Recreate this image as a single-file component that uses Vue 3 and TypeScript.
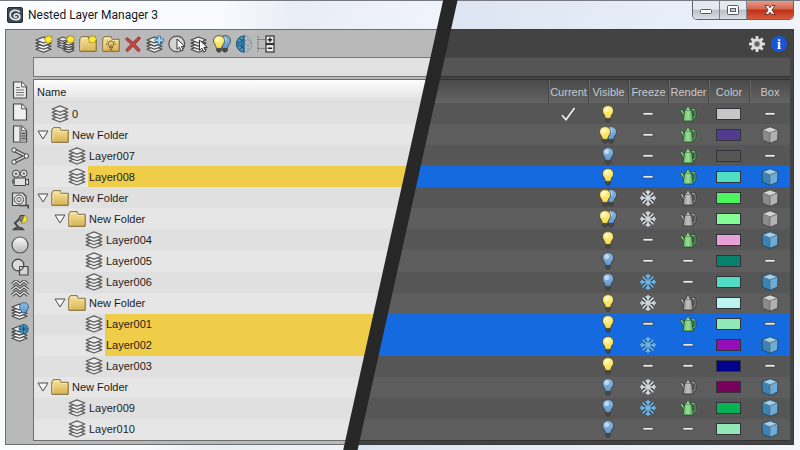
<script setup lang="ts">
import { ref } from 'vue'

type Kind = 'layer' | 'folder'

interface Row {
  name: string
  kind: Kind
  depth: number
  selected?: boolean
  current?: boolean
  visible: 'bulbOn' | 'bulbOff' | 'bulbBoth'
  freeze: 'dash' | 'flakeGrey' | 'flakeBlue'
  render: 'dash' | 'potGreen' | 'potGrey'
  color: string
  box: 'dash' | 'cubeGrey' | 'cubeBlue'
}

const rows: Row[] = [
  { name: '0', kind: 'layer', depth: 0, current: true, visible: 'bulbOn', freeze: 'dash', render: 'potGreen', color: '#c6c6c6', box: 'dash' },
  { name: 'New Folder', kind: 'folder', depth: 0, visible: 'bulbBoth', freeze: 'dash', render: 'potGreen', color: '#533b90', box: 'cubeGrey' },
  { name: 'Layer007', kind: 'layer', depth: 1, visible: 'bulbOff', freeze: 'dash', render: 'potGreen', color: '#565656', box: 'dash' },
  { name: 'Layer008', kind: 'layer', depth: 1, selected: true, visible: 'bulbOn', freeze: 'dash', render: 'potGreen', color: '#4fe0c4', box: 'cubeBlue' },
  { name: 'New Folder', kind: 'folder', depth: 0, visible: 'bulbBoth', freeze: 'flakeGrey', render: 'potGrey', color: '#4ef45f', box: 'cubeGrey' },
  { name: 'New Folder', kind: 'folder', depth: 1, visible: 'bulbBoth', freeze: 'flakeGrey', render: 'potGrey', color: '#84fd92', box: 'cubeGrey' },
  { name: 'Layer004', kind: 'layer', depth: 2, visible: 'bulbOn', freeze: 'dash', render: 'potGreen', color: '#e8a0d8', box: 'cubeBlue' },
  { name: 'Layer005', kind: 'layer', depth: 2, visible: 'bulbOff', freeze: 'dash', render: 'dash', color: '#08806c', box: 'dash' },
  { name: 'Layer006', kind: 'layer', depth: 2, visible: 'bulbOff', freeze: 'flakeBlue', render: 'dash', color: '#50dcc2', box: 'cubeBlue' },
  { name: 'New Folder', kind: 'folder', depth: 1, visible: 'bulbOn', freeze: 'flakeGrey', render: 'potGrey', color: '#bdf3ee', box: 'cubeGrey' },
  { name: 'Layer001', kind: 'layer', depth: 2, selected: true, visible: 'bulbOn', freeze: 'dash', render: 'potGreen', color: '#92e7b6', box: 'dash' },
  { name: 'Layer002', kind: 'layer', depth: 2, selected: true, visible: 'bulbOn', freeze: 'flakeBlue', render: 'dash', color: '#9410b6', box: 'cubeBlue' },
  { name: 'Layer003', kind: 'layer', depth: 2, visible: 'bulbOn', freeze: 'dash', render: 'dash', color: '#02028c', box: 'dash' },
  { name: 'New Folder', kind: 'folder', depth: 0, visible: 'bulbOff', freeze: 'flakeGrey', render: 'potGrey', color: '#78025a', box: 'cubeBlue' },
  { name: 'Layer009', kind: 'layer', depth: 1, visible: 'bulbOff', freeze: 'flakeBlue', render: 'potGreen', color: '#08b254', box: 'cubeBlue' },
  { name: 'Layer010', kind: 'layer', depth: 1, visible: 'bulbOff', freeze: 'dash', render: 'dash', color: '#92e7b6', box: 'cubeBlue' },
]

const columns = ['Current', 'Visible', 'Freeze', 'Render', 'Color', 'Box']

/* Four stacked sheets, painted bottom first. */
function stack(x: number, y: number, w: number, step: number, fill: string, stroke: string): string {
  const h = w * 0.2
  let out = ''
  for (let i = 3; i >= 0; i--) {
    const t = y + i * step
    out += `<path d="M${x + w / 2} ${t}L${x + w} ${t + h}L${x + w / 2} ${t + 2 * h}L${x} ${t + h}Z" fill="${fill}" stroke="${stroke}" stroke-width="1.2" stroke-linejoin="round"/>`
  }
  return out
}

function bulb(cx: number, fill: string): string {
  return `<g transform="translate(${cx} 0)"><path d="M-2.400 13h4.800v2.600l-1.200 1.500h-2.400l-1.200-1.500z" fill="#4a4a4a" stroke="#2e2e2e" stroke-width=".6"/>
  <path d="M0 .6c-3.400 0-5.500 2.300-5.500 5.200 0 2.700 1.800 3.700 2.500 5.700.3 1 .2 1.700.8 1.900h4.400c.6-.2.500-.9.800-1.900.7-2 2.500-3 2.500-5.700 0-2.900-2.100-5.200-5.500-5.200z" fill="url(#${fill})" stroke="#3c3c34" stroke-width=".8"/>
  <ellipse cx="-1.200" cy="4.800" rx="2.300" ry="2.500" fill="#fff" opacity=".55"/></g>`
}

function flake(color: string): string {
  let arms = ''
  for (let a = 0; a < 360; a += 45) {
    arms += a % 90 === 0
      ? `<path d="M9 9V1M6.700 2.300 9 4.600l2.300-2.300" transform="rotate(${a} 9 9)"/>`
      : `<path d="M9 9V1.400" transform="rotate(${a} 9 9)"/>`
  }
  const g = (c: string, w: number, o: number) => `<g fill="none" stroke="${c}" stroke-width="${w}" stroke-opacity="${o}">${arms}</g>`
  return g('#26303a', 2.8, 0.5) + g(color, 1.5, 1)
}

function pot(fill: string, stroke: string): string {
  return `<path d="M5.400 13.800 3.400 8.600 1 5.400l1.800-1.200 2.200 3.200 1.200 1.600z" fill="url(#${fill})" stroke="${stroke}" stroke-width=".8"/>
  <path d="M12.200 6.200c1-2.200 4-2.200 4 .6v3.600c0 1.400-1 2.400-2.800 2.800" fill="none" stroke="${stroke}" stroke-width="2.400"/>
  <path d="M12.200 6.200c1-2.200 4-2.200 4 .6v3.600c0 1.400-1 2.400-2.800 2.800" fill="none" stroke="url(#${fill})" stroke-width="1.100"/>
  <path d="M7.800 3.600c-.4-2.800 2.800-2.800 2.400 0l2.300 1.200 1.900 11.200H4l1.700-11.200z" fill="url(#${fill})" stroke="${stroke}" stroke-width=".8" stroke-linejoin="round"/>
  <path d="M6 5.600h6.200" stroke="${stroke}" stroke-width=".7" opacity=".7"/>`
}

function cube(top: string, left: string, right: string, edge: string): string {
  return `<g stroke="${edge}" stroke-width=".9" stroke-linejoin="round"><path d="M9 .8 17 3.800 9 7 1 3.800z" fill="${top}"/><path d="M1 3.800 9 7v10.400l-7.600-3.400z" fill="${left}"/><path d="M17 3.800 9 7v10.400l7.600-3.400z" fill="${right}"/></g><path d="M9 7.400v8.800M2 4.200 9 7l7-2.800" stroke="#fff" stroke-opacity=".45" stroke-width=".8" fill="none"/>`
}

const folderShape = (x: number) =>
  `<path d="M${x} 4.200V16.600h16.400V4.600h-7.600L9.200 2H2.400z" transform="translate(0 -.3)" fill="url(#gold)" stroke="#776636" stroke-width="1" stroke-linejoin="round"/><path d="M1.900 6.200V15.400M2 4.500 3 2.900h5.600l1.600 2.500h6" stroke="#fff6c8" stroke-width=".8" fill="none" opacity=".8"/>`

const spark = `<path d="M13.500 0l1.200 1.700 2-.6-.2 2.100 1.500 1.300-1.700 1.200.2 2.100-1.900-.5-1.300 1.600-1.200-1.700-2 .4.300-2-1.600-1.400 1.800-1.100-.1-2.100 1.900.7z" fill="#ffe92e" stroke="#948424" stroke-width=".7"/>`
const pointer = (x: number, y: number) =>
  `<path transform="translate(${x} ${y})" d="M0 0v10.400l2.400-2.200 1.800 3.900 2-1-1.800-3.600h3.400z" fill="#fff" stroke="#222" stroke-width=".9" stroke-linejoin="round"/>`
const sheet = (fill: string) =>
  `<path d="M2.500 1h8.300L15.500 5.800V17h-13z" fill="${fill}" stroke="#4a4a4a" stroke-width="1.200"/><path d="M10.700 1.200v4.700h4.700" fill="#fff" stroke="#4a4a4a"/>`
const smallGlobe = (x: number, y: number, r: number) =>
  `<circle cx="${x}" cy="${y}" r="${r}" fill="#4f9fd2" stroke="#23506e" stroke-width=".8"/><path d="M${x - r} ${y}h${2 * r}M${x} ${y - r}v${2 * r}M${x - r * 0.7} ${y - r * 0.7}l${r * 1.4} ${r * 1.4}M${x + r * 0.7} ${y - r * 0.7}l${-r * 1.4} ${r * 1.4}" stroke="#1d4664" stroke-width=".8"/>`

const tool = (x = 1, w = 15) => stack(x, 2, w, 3.1, '#f2f2f2', '#444')

const icons: Record<string, string> = {
  layer: stack(1.2, 0.9, 15.6, 3.3, '#ededed', '#606060'),
  folder: folderShape(0.8),
  check: '<path d="M3 10.200 7 14.800 15.500 3" fill="none" stroke="#f2f2f2" stroke-width="1.600"/>',
  dash: '<rect x="4" y="7.600" width="10" height="2.400" fill="#ececec" stroke="#3e3e3e" stroke-width=".6"/>',
  bulbOn: bulb(9, 'sun'),
  bulbOff: bulb(9, 'sky'),
  bulbBoth: bulb(12, 'sky') + bulb(6, 'sun'),
  flakeGrey: flake('#d9dee2'),
  flakeBlue: flake('#6dbcf0'),
  potGreen: pot('leaf', '#244d28'),
  potGrey: pot('steel', '#343434'),
  cubeGrey: cube('#d4d4d4', '#8b8b8b', '#b2b2b2', '#454545'),
  cubeBlue: cube('#a2d0ec', '#3b83b4', '#6cacd6', '#234860'),
  newLayer: tool() + spark,
  newStack: stack(0.5, 2, 11, 2.4, '#e2e2e2', '#555') + stack(6.500, 6, 10.500, 2.4, '#f2f2f2', '#444') + spark,
  newFolder: folderShape(0.8) + spark,
  bulbFolder: folderShape(0.8) + '<path d="M7.600 14.600h2.800M9 5.900a3 3 0 0 0-1.700 5.300l.4 1.800h2.600l.4-1.800A3 3 0 0 0 9 5.900zM9 9.500V13M4 9h1.200M12.800 9H14M5 5.900l.9.900M13 5.900l-.9.900" fill="none" stroke="#6f6232" stroke-width="1"/>',
  remove: '<path d="M3.200 2.500 9 7.300l5.600-5.600 2 1.700L11 9.200l5.400 5.900-2.200 1.700L9 11.200l-5.400 5.500-2-1.600L7 9.300 1.500 4.200z" fill="#c94444" stroke="#7a2727" stroke-width=".8"/>',
  addLayer: tool() + '<path d="M11.900 1h2.600v2.900h3v2.600h-3v2.900h-2.600V6.500h-3V3.900h3z" fill="#a6daf8" stroke="#2a6f9e" stroke-width=".8"/>',
  pick: '<circle cx="8.800" cy="9" r="7.900" fill="#d4d4d4" stroke="#555" stroke-width="1.200"/>' + pointer(9, 4),
  pickLayer: tool() + pointer(9.500, 5),
  bulbs: bulb(12, 'sky') + bulb(6, 'sun'),
  globe: '<path d="M9 1v16C-1 17-1 1 9 1z" fill="#4292c4" stroke="#1f4c69"/><path d="M4.200 3.500 7 5.500 4.500 8 2 7M1.800 11 4.600 9.700 7 12l-2.500 2.700M7 5.500V12M9 4 7 5.500M9 14l-2-2" stroke="#1f4c69" fill="none"/><path d="M10 1c9 1 9 15 0 16M10 6l3-1.500M13 4.500l3 3.500-3 2.500-3-2M13 10.500v4.500" fill="none" stroke="#71899a" stroke-dasharray="1.500 1"/><path d="M9.200 0v18" stroke="#3375a0"/>',
  expand: '<path d="M1 1v16M1 4.500h8M1 13.500h8" fill="none" stroke="#666" stroke-dasharray="1.500 1"/><g fill="#eee" stroke="#333" stroke-width="1.200"><rect x="9" y="1" width="8" height="7.500"/><rect x="9" y="9.500" width="8" height="7.500"/></g><path d="M10.800 4.800h4.400M13 2.600V7M10.800 13.200h4.400" stroke="#222" stroke-width="1.400"/>',
  page: sheet('#ececec') + '<path d="M5 6.500h4M5 9h8M5 11.500h8M5 14h8" stroke="#777"/>',
  pageBlank: sheet('#f0f0f0'),
  pageSplit: sheet('#ececec') + '<path d="M9 6.500h6V16.500H9z" fill="#a8a8a8"/><path d="M9 2v14.500M10.500 8.500h4M10.500 11h4M10.500 13.500h4" stroke="#555"/>',
  spline: '<path d="M3 3 15 9 3 15" fill="none" stroke="#444" stroke-width="3.800"/><path d="M3 3 15 9 3 15" fill="none" stroke="#d4d4d4" stroke-width="1.600"/><g fill="#eee" stroke="#444"><circle cx="3" cy="3" r="2.200"/><circle cx="15.300" cy="9" r="2.200"/><circle cx="3" cy="15" r="2.200"/></g>',
  camera: '<g fill="#e0e0e0" stroke="#444"><circle cx="5" cy="4.700" r="3.600"/><circle cx="12.800" cy="4.400" r="3.400"/><path d="M3 9h11.500v7.500H3zM14.500 11.500 17.500 10v6l-3-1.500z"/></g><g fill="#666"><circle cx="5" cy="4.700" r="1.300"/><circle cx="12.800" cy="4.400" r="1.200"/></g><path d="M1 10.500h3v4H1z" fill="#666"/>',
  tape: '<path d="M1.500 2h10.500l3 3.500v9h-13.500z" fill="#ddd" stroke="#444" stroke-width="1.200"/><circle cx="8" cy="8.500" r="4.500" fill="#f4f4f4" stroke="#444"/><circle cx="8" cy="8.500" r="2.200" fill="#d0d0d0" stroke="#666"/><path d="M8 14.500h9.200v3" fill="none" stroke="#444" stroke-width="1.600"/>',
  lamp: '<path d="M10.500 3 4 9l4 5" fill="none" stroke="#444" stroke-width="2"/><path d="M2.500 15.500c2-2.600 8-2.600 10 0z" fill="#aaa" stroke="#444" stroke-width="1.400"/><path d="M9 1.500h5l1.500 5-4.500 2.200-3-4z" fill="#777" stroke="#444"/><path d="M13.500 1.500c3.500.5 3.500 5 .5 7l-3.600.8z" fill="#f4e43c" stroke="#8c8428" stroke-width=".7"/>',
  sphere: '<circle cx="9" cy="9" r="8" fill="url(#ball)" stroke="#555" stroke-width="1.200"/>',
  shapes: '<path d="M8.500 8.500h8.500V17H8.500z" fill="#d4d4d4" stroke="#444" stroke-width="1.200"/><circle cx="7" cy="7" r="5.800" fill="#e2e2e2" fill-opacity=".85" stroke="#444" stroke-width="1.200"/><path d="M12.500 8.500h-4v4" fill="none" stroke="#444"/>',
  waves: [2.500, 8, 13.500].map((y) => `<path d="M1 ${y + 2} 5 ${y - 1.500}l4 3.500 4-3.500 4 3.500" fill="none" stroke="#444" stroke-width="3.200" stroke-linejoin="round"/><path d="M1 ${y + 2} 5 ${y - 1.500}l4 3.500 4-3.500 4 3.500" fill="none" stroke="#e6e6e6" stroke-width="1.300"/>`).join(''),
  layerBulb: tool() + '<path d="M13 .6c-2.700 0-4.500 1.900-4.500 4.200 0 2.200 1.900 2.900 2.400 6h4.200c.5-3.100 2.400-3.800 2.400-6 0-2.300-1.800-4.200-4.500-4.200z" fill="url(#sky)" stroke="#2c5878" stroke-width=".8"/>',
  layerGlobe: tool() + smallGlobe(12.600, 5, 4.600),
  gear:
    '<g fill="#dcdcdc">' +
    [0, 45, 90, 135].map((a) => `<path d="M7.700 1h2.600l.8 8-.8 8H7.700l-.8-8z" transform="rotate(${a} 9 9)"/>`).join('') +
    '<circle cx="9" cy="9" r="5.600"/></g><circle cx="9" cy="9" r="2.500" fill="#55585c" stroke="#96969a" stroke-width="1.200"/>',
}

const toolbar: [string, string][] = [
  ['newLayer', 'New layer'],
  ['newStack', 'New layer from selection'],
  ['newFolder', 'New folder'],
  ['bulbFolder', 'Isolate folder'],
  ['remove', 'Delete'],
  ['addLayer', 'Add selection to layer'],
  ['pick', 'Select objects'],
  ['pickLayer', 'Select layers'],
  ['bulbs', 'Toggle visibility'],
  ['globe', 'Toggle freeze'],
  ['expand', 'Expand or collapse all'],
]

const sidebar: [string, string][] = [
  ['page', 'All'],
  ['pageBlank', 'None'],
  ['pageSplit', 'Invert'],
  ['spline', 'Shapes'],
  ['camera', 'Cameras'],
  ['tape', 'Helpers'],
  ['lamp', 'Lights'],
  ['sphere', 'Geometry'],
  ['shapes', 'Groups'],
  ['waves', 'Space warps'],
  ['layerBulb', 'Hidden layers'],
  ['layerGlobe', 'Frozen layers'],
]

const query = ref('')
</script>

<template>
  <main class="stage">
    <svg class="defs" aria-hidden="true">
      <defs>
        <linearGradient id="gold" x1="0" y1="0" x2="0" y2="1"><stop offset="0" stop-color="#f7e5a0" /><stop offset="1" stop-color="#d9b350" /></linearGradient>
        <linearGradient id="sun" x1="0" y1="0" x2="0" y2="1"><stop offset="0" stop-color="#fff48c" /><stop offset="1" stop-color="#f8dc50" /></linearGradient>
        <linearGradient id="sky" x1="0" y1="0" x2="0" y2="1"><stop offset="0" stop-color="#8dbbe8" /><stop offset="1" stop-color="#6099d4" /></linearGradient>
        <linearGradient id="leaf"><stop offset="0" stop-color="#66b46c" /><stop offset=".5" stop-color="#9be094" /><stop offset="1" stop-color="#4f9c58" /></linearGradient>
        <linearGradient id="steel"><stop offset="0" stop-color="#8e8e8e" /><stop offset=".5" stop-color="#c4c4c4" /><stop offset="1" stop-color="#858585" /></linearGradient>
        <linearGradient id="ball" x1="0" y1="0" x2="0" y2="1"><stop offset="0" stop-color="#fafafa" /><stop offset="1" stop-color="#b8b8b8" /></linearGradient>
      </defs>
    </svg>

    <section class="window light">
      <header class="titlebar">
        <svg class="logo" viewBox="0 0 16 16" aria-hidden="true">
          <rect x=".5" y=".5" width="15" height="15" rx="1.500" fill="#3d4752" stroke="#252c34" />
          <path d="M12.800 5.200C10.500 2.300 3.200 2.300 3.200 8c0 5.600 9 6 9.600 2 .4-3.600-5.600-4-5.700-1.200 0 1.600 2.200 1.900 3 .7" fill="none" stroke="#e4e9ee" stroke-width="1.700" />
        </svg>
        <h1>Nested Layer Manager 3</h1>
      </header>
      <div class="body">
        <nav class="sidebar">
          <button v-for="[icon, label] in sidebar" :key="icon" type="button" :aria-label="label">
            <svg class="icon" viewBox="0 0 18 18" v-html="icons[icon]"></svg>
          </button>
        </nav>
        <div class="content">
          <div class="toolbar">
            <button v-for="[icon, label] in toolbar" :key="icon" type="button" :aria-label="label">
              <svg class="icon" viewBox="0 0 18 18" v-html="icons[icon]"></svg>
            </button>
          </div>
          <input v-model="query" class="search" type="text" aria-label="Filter layers" />
          <table class="grid">
            <thead>
              <tr><th scope="col">Name</th></tr>
            </thead>
            <tbody>
              <tr v-for="(row, i) in rows" :key="i" :class="{ selected: row.selected }">
                <td :class="['name', 'depth-' + row.depth]">
                  <button v-if="row.kind === 'folder'" class="twisty" type="button" aria-label="Collapse folder">
                    <svg viewBox="0 0 12 12"><path d="M1 2h10L6 10z" fill="#f6f6f6" stroke="#4c4c4c" /></svg>
                  </button>
                  <span v-else class="twisty"></span>
                  <svg class="icon" viewBox="0 0 18 18" v-html="icons[row.kind]"></svg>
                  <span class="label">{{ row.name }}</span>
                </td>
              </tr>
            </tbody>
          </table>
        </div>
      </div>
    </section>

    <section class="window dark">
      <header class="titlebar">
        <div class="controls">
          <button type="button" aria-label="Minimize">
            <svg viewBox="0 0 14 14"><rect x="1.500" y="6.500" width="11" height="4" rx="1" fill="#fff" stroke="#555c68" /></svg>
          </button>
          <button type="button" aria-label="Maximize">
            <svg viewBox="0 0 14 14"><rect x="1.500" y="2.500" width="11" height="9" rx="1" fill="#fff" stroke="#555c68" /><rect x="4.500" y="5.500" width="5" height="3" fill="#c6ccd6" stroke="#555c68" /></svg>
          </button>
          <button class="close" type="button" aria-label="Close">
            <svg viewBox="0 0 14 14"><path d="M2 2.500h3.200L7 4.800l1.800-2.300H12L8.900 7l3.100 4.500H8.800L7 9.200l-1.800 2.300H2L5.100 7z" fill="#fff" stroke="#5c3230" stroke-width=".9" /></svg>
          </button>
        </div>
      </header>
      <div class="body">
        <div class="content">
          <div class="toolbar">
            <button type="button" aria-label="Settings">
              <svg class="icon" viewBox="0 0 18 18" v-html="icons.gear"></svg>
            </button>
            <button type="button" aria-label="Information">
              <svg class="icon" viewBox="0 0 18 18">
                <circle cx="9" cy="9" r="8" fill="#1557d8" />
                <text class="info" x="9" y="14" text-anchor="middle">i</text>
              </svg>
            </button>
          </div>
          <div class="search"></div>
          <table class="grid">
            <thead>
              <tr>
                <td></td>
                <th v-for="column in columns" :key="column" scope="col">{{ column }}</th>
              </tr>
            </thead>
            <tbody>
              <tr v-for="(row, i) in rows" :key="i" :class="{ selected: row.selected }">
                <td></td>
                <td><svg v-if="row.current" class="icon" viewBox="0 0 18 18" v-html="icons.check"></svg></td>
                <td><svg class="icon" viewBox="0 0 18 18" v-html="icons[row.visible]"></svg></td>
                <td><svg class="icon" viewBox="0 0 18 18" v-html="icons[row.freeze]"></svg></td>
                <td><svg class="icon" viewBox="0 0 18 18" v-html="icons[row.render]"></svg></td>
                <td><button class="swatch" type="button" aria-label="Layer color" :style="{ backgroundColor: row.color }"></button></td>
                <td><svg class="icon" viewBox="0 0 18 18" v-html="icons[row.box]"></svg></td>
              </tr>
            </tbody>
          </table>
        </div>
      </div>
    </section>

    <div class="divider" aria-hidden="true"></div>
  </main>
</template>

<style>
body {
  margin: 0;
}
</style>

<style scoped>
.stage {
  display: grid;
  min-height: 100vh;
  font-family: 'Liberation Sans', Arial, sans-serif;
  font-size: 11px;
  overflow: hidden;
}

.defs {
  position: absolute;
  width: 0;
  height: 0;
}

/* Both windows and the divider share one cell; clip paths split them along a slanted line. */
.window,
.divider {
  grid-area: 1 / 1;
}

.window {
  box-sizing: border-box;
  display: flex;
  flex-direction: column;
  padding: 0 5px 5px;
  border-top: 1px solid #777982;
}

.light {
  background: linear-gradient(100deg, #fbfdff 0, #f8fbff 25%, #e9edf4 34%, #f2f6fc 55%);
}

.dark {
  padding-right: 6px;
  background: linear-gradient(100deg, #dbe4f1 50%, #e9eff8 80%, #f4f8fc 100%);
  clip-path: polygon(56% 0, 100% 0, 100% 100%, 44% 100%);
}

.divider {
  background: #272727;
  clip-path: polygon(55.400% 0, 57.200% 0, 44.700% 100%, 42.900% 100%);
}

button {
  display: grid;
  place-items: center;
  padding: 0;
  border: 0;
  background: none;
  font: inherit;
}

.icon {
  display: block;
  width: 18px;
  height: 18px;
}

.titlebar {
  display: flex;
  align-items: center;
  height: 28px;
}

.light .titlebar {
  gap: 5px;
  padding-left: 2px;
}

.logo {
  width: 16px;
  height: 16px;
}

h1 {
  margin: 0;
  color: #14181f;
  font: 12px Roboto, 'Open Sans', sans-serif;
}

.dark .titlebar {
  align-items: flex-start;
  justify-content: flex-end;
}

.controls {
  display: flex;
  height: 18px;
  border: 1px solid #5f6570;
  border-top: 0;
  border-radius: 0 0 5px 5px;
  overflow: hidden;
}

.controls button {
  width: 27px;
  border-right: 1px solid #7c828c;
  background: linear-gradient(#e6e9ef 45%, #bcc1ca 50%, #d9dde4);
}

.controls svg {
  width: 14px;
  height: 14px;
}

.controls .close {
  width: 46px;
  border-right: 0;
  background: linear-gradient(#e79a86 0, #d4654d 45%, #bd3014 50%, #d8593a);
}

.body {
  flex: 1;
  display: flex;
  border: 1px solid #6c6e6c;
}

.light .body {
  background: #b9b9b9;
}

.dark .body {
  padding-right: 3px;
  border-color: #3a3c3b;
  background: #434343;
}

.sidebar {
  display: grid;
  grid-auto-rows: 1fr;
  width: 27px;
  height: 265px;
  padding-top: 49px;
}

.content {
  flex: 1;
  display: flex;
  flex-direction: column;
  padding-bottom: 3px;
}

.toolbar {
  display: grid;
  height: 27px;
  align-items: center;
}

.light .toolbar {
  grid-template-columns: repeat(11, 1fr);
  width: 244px;
}

.dark .toolbar {
  grid-template-columns: 22px 22px;
  justify-content: end;
}

.info {
  fill: #fff;
  font: bold 14px 'Liberation Serif', serif;
}

.search {
  box-sizing: border-box;
  width: 100%;
  height: 20px;
  margin: 0 0 2px;
  padding: 0 4px;
  border: 1px solid #777;
  border-right: 0;
  border-radius: 0;
  background: #e1e1e1;
  font: inherit;
}

.dark .search {
  border-color: #4b4b4b #333 #333;
  background: #555;
}

.grid {
  flex: 1;
  display: grid;
  grid-template-rows: 23px;
  grid-auto-rows: 1fr;
  border-top: 1px solid #6e6e6e;
  border-bottom: 1px solid #6e6e6e;
}

.light .grid {
  border-left: 1px solid #6e6e6e;
  color: #1c1c1c;
}

.dark .grid {
  border-color: #333;
  color: #c9c9c9;
}

.grid thead,
.grid tbody {
  display: contents;
}

.grid tr {
  display: grid;
  align-items: center;
}

.dark tr {
  grid-template-columns: 1fr repeat(4, 40px) repeat(2, 41px);
}

.grid th,
.grid td {
  padding: 0;
}

.grid th {
  font-weight: 400;
}

.light th {
  padding-left: 3px;
  text-align: left;
}

.light thead tr {
  background: linear-gradient(#fdfdfd, #efefef 50%, #dadada);
}

.dark thead tr {
  align-items: stretch;
  background: linear-gradient(#494949, #646464);
}

.dark th {
  display: grid;
  place-items: center;
  border-left: 1px solid #474747;
  box-shadow: inset 1px 0 #666;
}

.light tbody tr {
  background: #e0e0e0;
}

.light tbody tr:nth-child(even) {
  background: #e6e6e6;
}

.dark tbody tr {
  background: #565656;
}

.dark tbody tr:nth-child(even) {
  background: #5d5d5d;
}

.dark tbody tr.selected {
  background: #156ae0;
}

.dark tbody td {
  display: grid;
  justify-items: center;
}

.name {
  display: flex;
  align-items: center;
  align-self: stretch;
}

.grid .depth-0 {
  padding-left: 3px;
}

.grid .depth-1 {
  padding-left: 20px;
}

.grid .depth-2 {
  padding-left: 37px;
}

.twisty {
  width: 12px;
  height: 12px;
  margin-right: 2px;
}

.twisty svg {
  width: 12px;
  height: 12px;
}

.label {
  flex: 1;
  display: flex;
  align-items: center;
  align-self: stretch;
  margin-left: 2px;
  padding-left: 1px;
}

.light .selected .label {
  background: #efcd48;
}

.swatch {
  box-sizing: border-box;
  width: 25px;
  height: 12px;
  border: 1px solid #30343a;
}
</style>
